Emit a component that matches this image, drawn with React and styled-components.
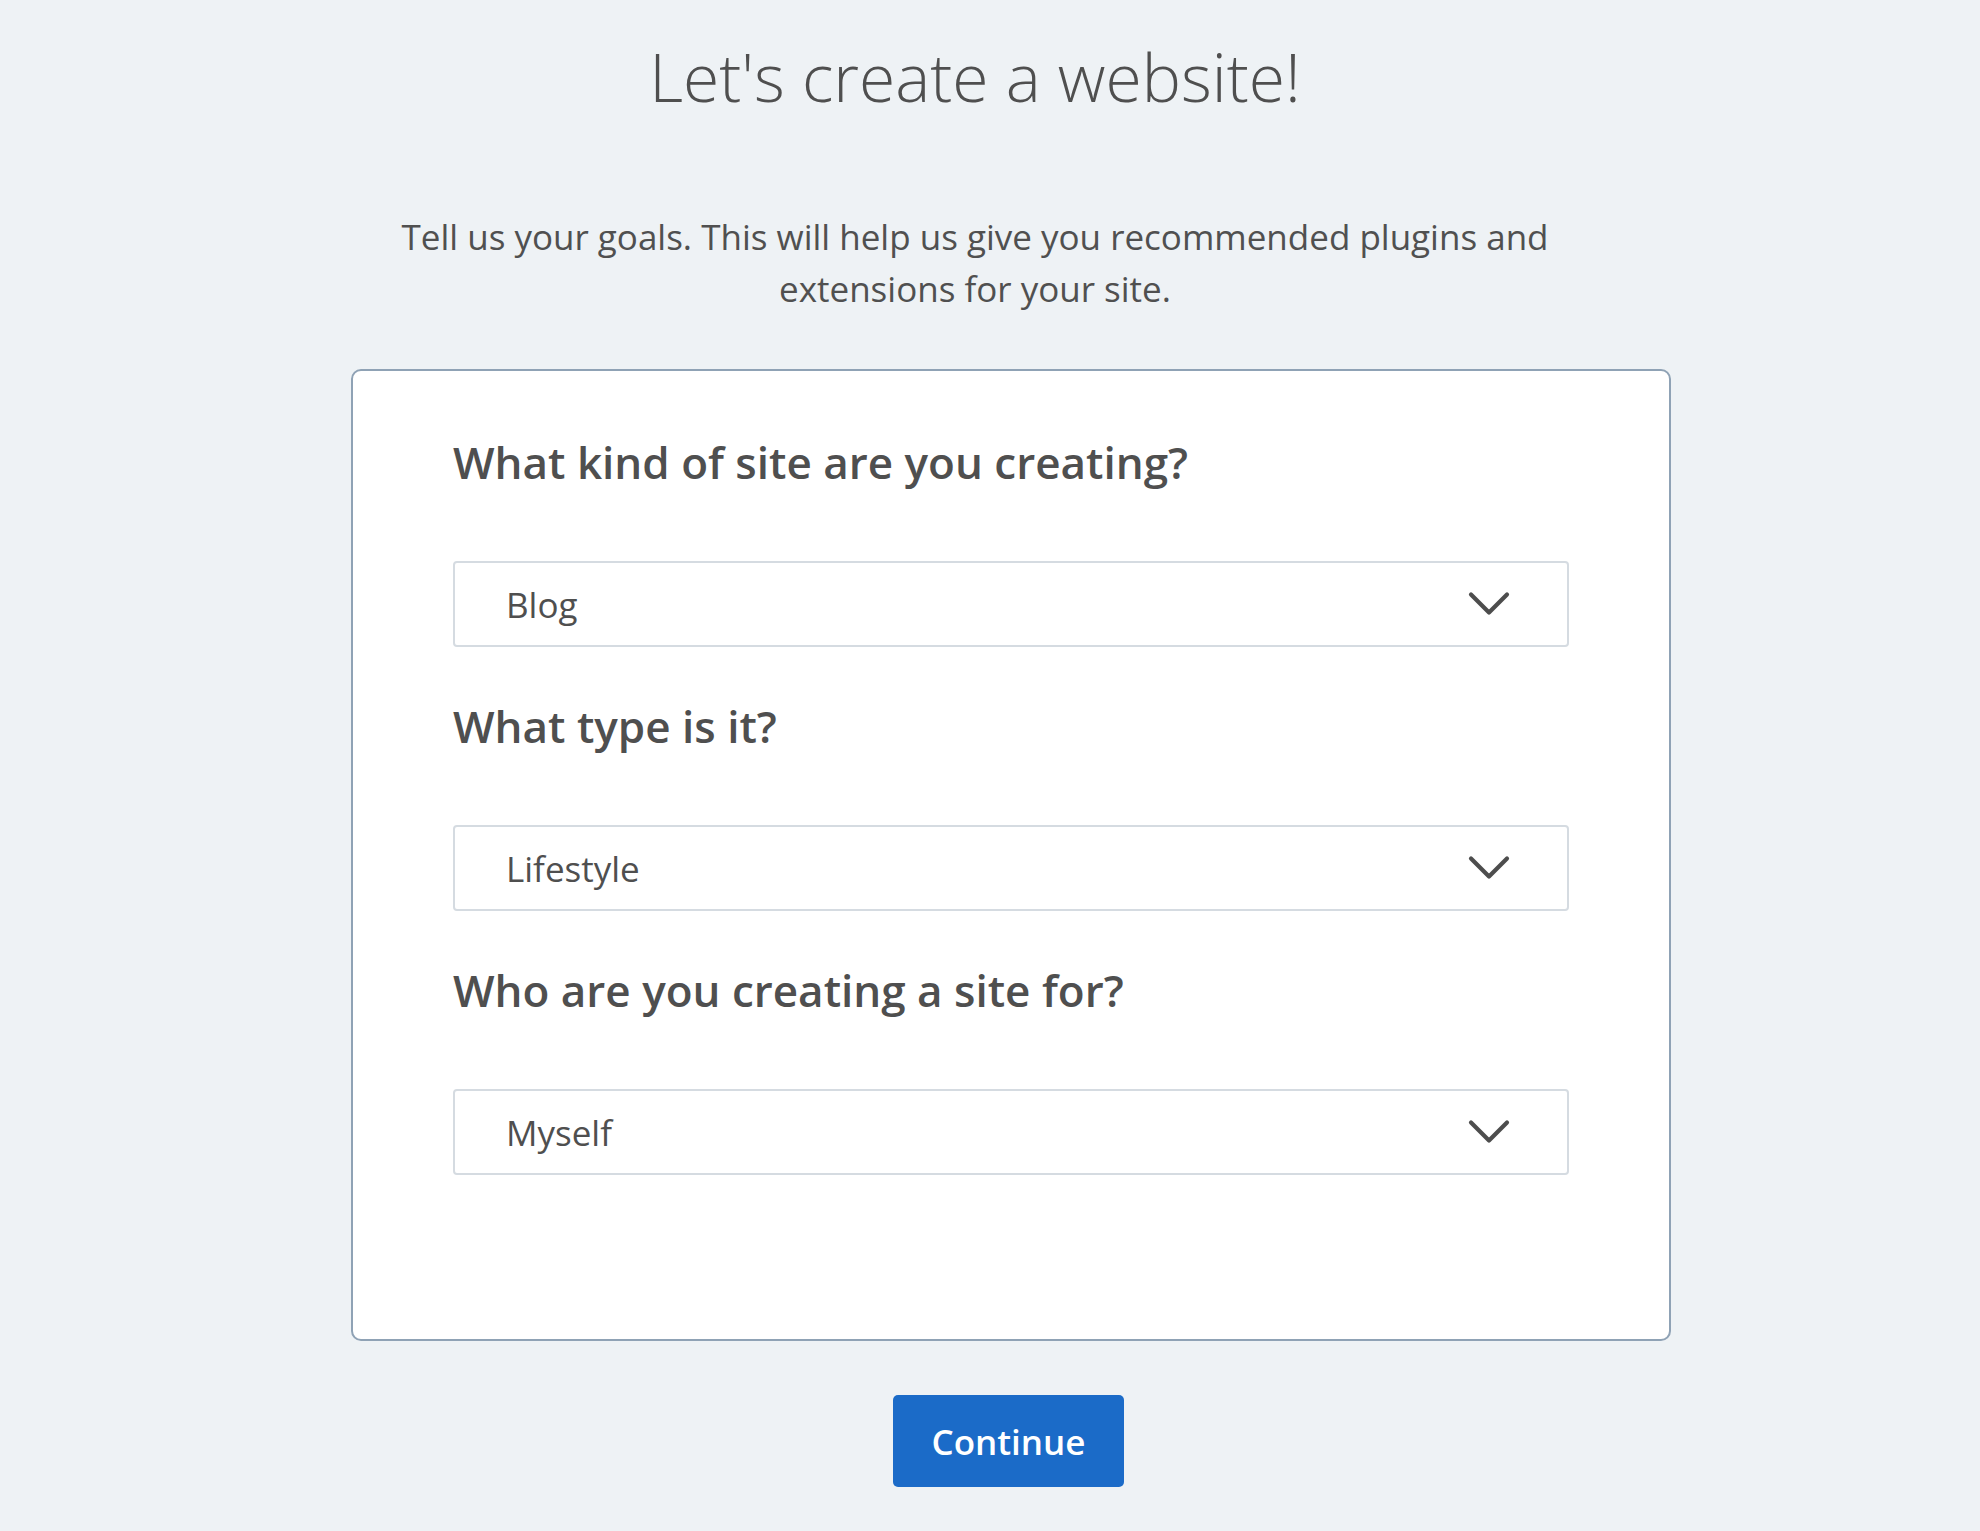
import styled, { createGlobalStyle } from "styled-components";

const GlobalStyle = createGlobalStyle`
  html, body {
    margin: 0;
    background: #eef2f5;
  }
  body {
    font-family: "Open Sans", "Liberation Sans", sans-serif;
    color: #505050;
  }
`;

const questions = [
  { label: "What kind of site are you creating?", value: "Blog" },
  { label: "What type is it?", value: "Lifestyle" },
  { label: "Who are you creating a site for?", value: "Myself" }
];

const Chevron = () => (
  <svg width="42" height="26" viewBox="0 0 42 26" fill="none">
    <polyline
      points="3,3.5 21,21.5 39,3.5"
      stroke="#4d4d4d"
      strokeWidth="4.2"
      strokeLinecap="round"
      strokeLinejoin="round"
    />
  </svg>
);

const App = () => {
  return (
    <Page>
      <GlobalStyle />
      <Header>
        <Title>Let's create a website!</Title>
        <Intro>
          Tell us your goals. This will help us give you recommended plugins and
          extensions for your site.
        </Intro>
      </Header>
      <Main>
        <Card>
          {questions.map((q) => (
            <Field key={q.label}>
              <Question>{q.label}</Question>
              <Select>
                <span>{q.value}</span>
                <Chevron />
              </Select>
            </Field>
          ))}
        </Card>
        <Button>Continue</Button>
      </Main>
    </Page>
  );
};

const Page = styled.div`
  min-height: 1531px;
  padding-top: 31px;
  box-sizing: border-box;
  display: flex;
  flex-direction: column;
`;

const Header = styled.header`
  display: flex;
  flex-direction: column;
  align-items: center;
  padding-right: 30px;
`;

const Title = styled.h1`
  margin: 0;
  font-size: 66px;
  line-height: 90px;
  font-weight: 300;
  color: #4f4f4f;
`;

const Intro = styled.p`
  margin: 90px 0 0;
  max-width: 1240px;
  text-align: center;
  font-size: 35px;
  line-height: 52px;
  font-weight: 400;
  color: #505050;
`;

const Main = styled.main`
  display: flex;
  flex-direction: column;
  align-items: center;
  padding-left: 42px;
  margin-top: 54px;
`;

const Card = styled.section`
  width: 1320px;
  box-sizing: border-box;
  background: #fff;
  border: 2px solid #8fa2b5;
  border-radius: 10px;
  padding: 63px 100px 164px 100px;
  display: flex;
  flex-direction: column;
  gap: 51px;
`;

const Field = styled.div`
  display: flex;
  flex-direction: column;
  gap: 71px;
`;

const Question = styled.h2`
  margin: 0;
  font-size: 44px;
  line-height: 56px;
  font-weight: 600;
  color: #4f4f4f;
`;

const Select = styled.div`
  height: 86px;
  box-sizing: border-box;
  border: 2px solid #d5dbe1;
  border-radius: 4px;
  padding: 0 57px 0 51px;
  display: flex;
  align-items: center;
  justify-content: space-between;
  font-size: 35px;
  color: #4f4f4f;
`;

const Button = styled.button`
  margin: 54px 5px 0 0;
  width: 231px;
  height: 92px;
  border: none;
  border-radius: 5px;
  background: #1b6bc8;
  color: #fff;
  font-family: "Open Sans", "Liberation Sans", sans-serif;
  font-size: 35px;
  font-weight: 600;
  cursor: pointer;
`;

export default App;
